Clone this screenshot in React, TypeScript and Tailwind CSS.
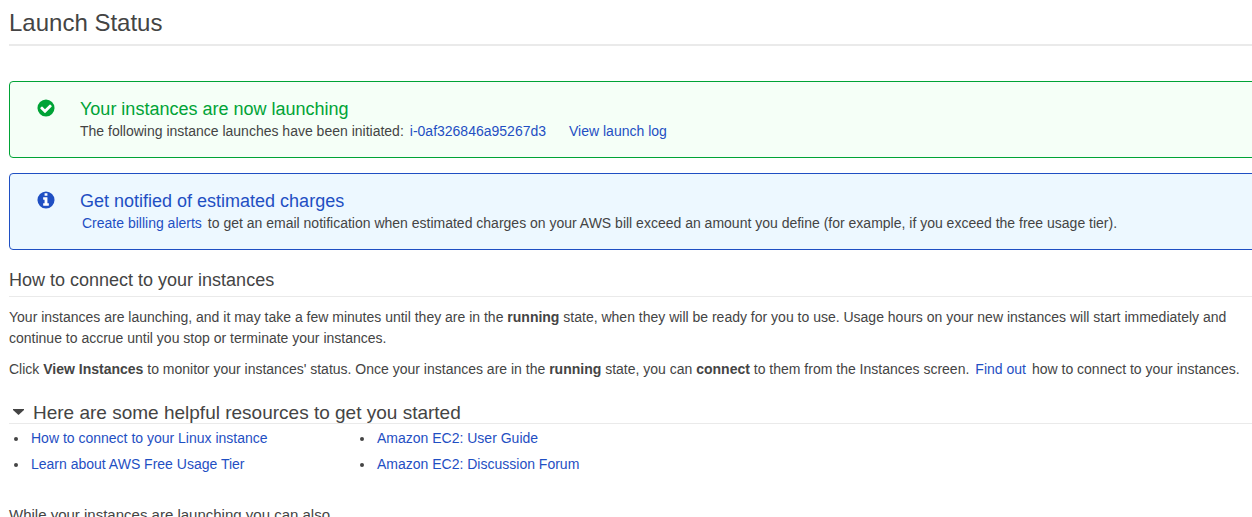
import React from "react";

function CheckIcon() {
  return (
    <svg viewBox="-42 -42 1620 1620" className="size-[18px]" aria-hidden="true">
      <circle cx="768" cy="768" r="768" fill="#00a336" />
      <path
        d="M1284 606q0-28-18-46l-91-90q-19-19-45-19t-45 19l-408 407-226-226q-19-19-45-19t-45 19l-91 90q-18 18-18 46 0 27 18 45l362 362q19 19 45 19 27 0 46-19l543-543q18-18 18-45z"
        fill="#fff"
      />
    </svg>
  );
}

function InfoIcon() {
  return (
    <svg viewBox="-42 -42 1620 1620" className="size-[18px]" aria-hidden="true">
      <circle cx="768" cy="768" r="768" fill="#1f4fc3" />
      <path
        d="M1024 1248v-160q0-14-9-23t-23-9h-96v-512q0-14-9-23t-23-9h-320q-14 0-23 9t-9 23v160q0 14 9 23t23 9h96v320h-96q-14 0-23 9t-9 23v160q0 14 9 23t23 9h448q14 0 23-9t9-23zM896 352v-160q0-14-9-23t-23-9h-192q-14 0-23 9t-9 23v160q0 14 9 23t23 9h192q14 0 23-9t9-23z"
        fill="#fff"
      />
    </svg>
  );
}

function Link({ children }: { children: React.ReactNode }) {
  return (
    <a href="#" className="text-[#1f4fc3] hover:underline">
      {children}
    </a>
  );
}

function ResourceList({ items }: { items: string[] }) {
  return (
    <ul className="list-disc space-y-[5px] pl-5">
      {items.map((item) => (
        <li key={item} className="pl-0.5">
          <Link>{item}</Link>
        </li>
      ))}
    </ul>
  );
}

export default function App() {
  return (
    <div className="h-screen overflow-hidden bg-white pl-[9px] font-['Liberation_Sans',Arial,sans-serif] text-sm leading-[21px] text-[#444]">
      <h1 className="border-b-2 border-[#eaeaea] pt-2 pb-1.5 text-2xl leading-[30px]">Launch Status</h1>

      <section className="-mr-2 mt-[35px] flex rounded border border-[#00a336] bg-[#f5fff7] pt-4 pb-[15px] pl-[27px]">
        <div className="w-[43px] pt-px">
          <CheckIcon />
        </div>
        <div>
          <h2 className="text-lg leading-[23px] text-[#00a336]">Your instances are now launching</h2>
          <p>
            The following instance launches have been initiated:
            <span className="mr-[23px] ml-1.5"><Link>i-0af326846a95267d3</Link></span>
            <Link>View launch log</Link>
          </p>
        </div>
      </section>

      <section className="-mr-2 mt-[15px] flex rounded border border-[#1f4fc3] bg-[#edf8ff] pt-4 pb-[15px] pl-[27px]">
        <div className="w-[43px] pt-px">
          <InfoIcon />
        </div>
        <div>
          <h2 className="text-lg leading-[23px] text-[#1f4fc3]">Get notified of estimated charges</h2>
          <p>
            <span className="mr-1.5 ml-0.5"><Link>Create billing alerts</Link></span>
            to get an email notification when estimated charges on your AWS bill exceed an amount you define (for example, if you exceed the free usage tier).
          </p>
        </div>
      </section>

      <h2 className="mt-[19px] border-b border-[#eaeaea] pb-[5px] text-lg leading-[22px]">How to connect to your instances</h2>
      <p className="mt-[10px]">
        Your instances are launching, and it may take a few minutes until they are in the <b>running</b> state, when they will be ready for you to use. Usage hours on your new instances will start immediately and continue to accrue until you stop or terminate your instances.
      </p>
      <p className="mt-[10px]">
        Click <b>View Instances</b> to monitor your instances' status. Once your instances are in the <b>running</b> state, you can <b>connect</b> to them from the Instances screen.
        <span className="mx-1.5"><Link>Find out</Link></span>
        how to connect to your instances.
      </p>

      <h2 className="mt-[22px] border-b border-[#eaeaea] text-[19px] leading-[21px]">
        <button type="button" aria-expanded="true" className="flex items-center gap-2">
          <svg viewBox="0 0 16 16" className="size-4" aria-hidden="true">
            <path d="M4 4h11v1l-5.5 5L4 5z" fill="#444" />
          </svg>
          Here are some helpful resources to get you started
        </button>
      </h2>
      <div className="mt-1 grid grid-cols-[346px_auto]">
        <ResourceList items={["How to connect to your Linux instance", "Learn about AWS Free Usage Tier"]} />
        <ResourceList items={["Amazon EC2: User Guide", "Amazon EC2: Discussion Forum"]} />
      </div>

      <p className="mt-[29px] text-[15px]">While your instances are launching you can also</p>
    </div>
  );
}
